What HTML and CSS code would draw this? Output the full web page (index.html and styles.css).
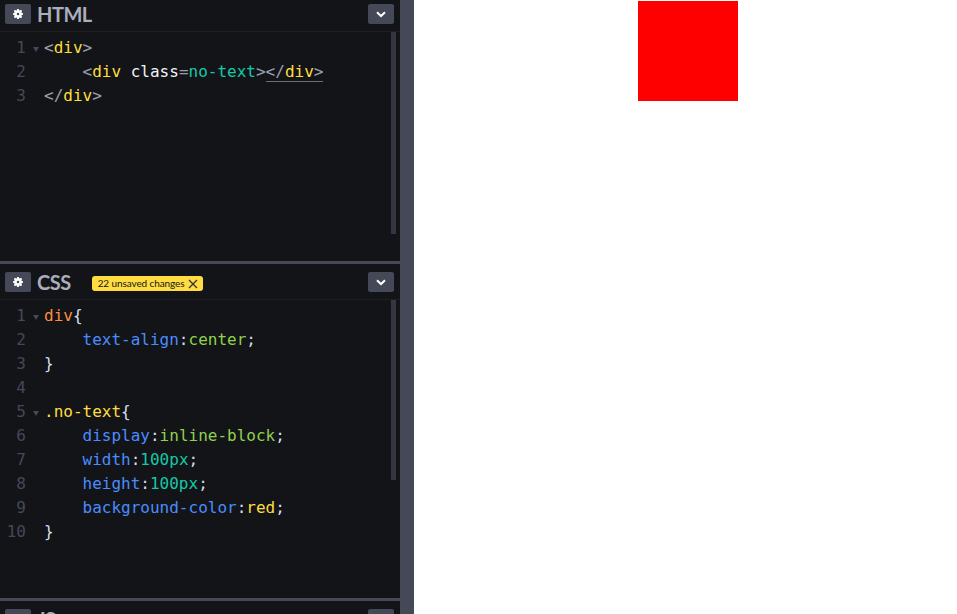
FILE: index.html
```html
<!DOCTYPE html>
<html lang="en">
<head>
<meta charset="utf-8">
<title>CodePen editor</title>
<link rel="stylesheet" href="styles.css">
</head>
<body>
<div class="app">
  <div class="editors">
    <section class="panel panel-html">
      <header class="bar">
        <button class="btn"><svg class="gear" viewBox="0 0 12 12"><path fill-rule="evenodd" d="M5 0h2l.3 1.5 1 .4L9.6 1 11 2.4l-.9 1.3.4 1 1.5.3v2l-1.5.3-.4 1 .9 1.3L9.6 11l-1.3-.9-1 .4L7 12H5l-.3-1.5-1-.4-1.3.9L1 9.6l.9-1.3-.4-1L0 7V5l1.5-.3.4-1L1 2.4 2.4 1l1.3.9 1-.4zM6 4.500a1.500 1.500 0 1 0 0 3 1.500 1.500 0 0 0 0-3z"/></svg></button>
        <h2 class="title">HTML</h2>
        <button class="btn btn-end"><svg class="chev" viewBox="0 0 10 7"><path d="M1 1.200 5 5l4-3.800"/></svg></button>
      </header>
      <div class="code">
        <div class="gutter"><span>1</span><span>2</span><span>3</span></div>
        <div class="folds"><span class="fold"></span></div>
<pre class="lines"><span class="p">&lt;</span><span class="y">div</span><span class="p">&gt;</span>
    <span class="p">&lt;</span><span class="y">div</span> <span class="w">class</span><span class="p">=</span><span class="t">no-text</span><span class="p">&gt;</span><span class="match"><span class="p">&lt;/</span><span class="y">div</span><span class="p">&gt;</span></span>
<span class="p">&lt;/</span><span class="y">div</span><span class="p">&gt;</span></pre>
        <div class="scroll scroll-html"></div>
      </div>
    </section>
    <section class="panel panel-css">
      <header class="bar">
        <button class="btn"><svg class="gear" viewBox="0 0 12 12"><path fill-rule="evenodd" d="M5 0h2l.3 1.5 1 .4L9.6 1 11 2.4l-.9 1.3.4 1 1.5.3v2l-1.5.3-.4 1 .9 1.3L9.6 11l-1.3-.9-1 .4L7 12H5l-.3-1.5-1-.4-1.3.9L1 9.6l.9-1.3-.4-1L0 7V5l1.5-.3.4-1L1 2.4 2.4 1l1.3.9 1-.4zM6 4.500a1.500 1.500 0 1 0 0 3 1.500 1.500 0 0 0 0-3z"/></svg></button>
        <h2 class="title">CSS</h2>
        <span class="badge">22 unsaved changes<svg class="x" viewBox="0 0 10 10"><path d="M1 1l8 8M9 1l-8 8"/></svg></span>
        <button class="btn btn-end"><svg class="chev" viewBox="0 0 10 7"><path d="M1 1.200 5 5l4-3.800"/></svg></button>
      </header>
      <div class="code">
        <div class="gutter"><span>1</span><span>2</span><span>3</span><span>4</span><span>5</span><span>6</span><span>7</span><span>8</span><span>9</span><span>10</span></div>
        <div class="folds"><span class="fold"></span><span></span><span></span><span></span><span class="fold"></span></div>
<pre class="lines"><span class="o">div</span><span class="l">{</span>
    <span class="b">text-align</span><span class="l">:</span><span class="g">center</span><span class="l">;</span>
<span class="l">}</span>

<span class="c">.no-text</span><span class="l">{</span>
    <span class="b">display</span><span class="l">:</span><span class="g">inline-block</span><span class="l">;</span>
    <span class="b">width</span><span class="l">:</span><span class="t">100px</span><span class="l">;</span>
    <span class="b">height</span><span class="l">:</span><span class="t">100px</span><span class="l">;</span>
    <span class="b">background-color</span><span class="l">:</span><span class="c">red</span><span class="l">;</span>
<span class="l">}</span></pre>
        <div class="scroll scroll-css"></div>
      </div>
    </section>
    <section class="panel panel-js">
      <header class="bar">
        <button class="btn"></button>
        <h2 class="title">JS</h2>
        <button class="btn btn-end"></button>
      </header>
    </section>
  </div>
  <div class="resizer"></div>
  <main class="preview"><div class="no-text"></div></main>
</div>
</body>
</html>
```

FILE: styles.css
```css
* { box-sizing: border-box; }
html, body { margin: 0; height: 100%; overflow: hidden; background: #fff; }
.app { display: flex; height: 614px; overflow: hidden; }
.editors { width: 400px; flex: none; display: flex; flex-direction: column; background: #131417; overflow: hidden; }
.panel { flex: none; display: flex; flex-direction: column; overflow: hidden; }
.panel-html { height: 261px; }
.panel-css { height: 337px; border-top: 3px solid #444857; }
.panel-js { flex: 1 1 auto; min-height: 0; border-top: 3px solid #444857; }
.bar { flex: none; height: 32px; display: flex; align-items: flex-start; padding: 4px 6px 0 5px; background: #131417; border-bottom: 1px solid #1e1f26; }
.panel-css .bar { height: 36px; padding-top: 8px; }
.panel-js .bar { padding-top: 8px; }
.btn { width: 26px; height: 20px; padding: 0; border: 0; border-radius: 2px; background: #444857; display: flex; align-items: center; justify-content: center; }
.btn-end { margin-left: auto; }
.gear { width: 10px; height: 10px; fill: #fff; }
.chev { width: 10px; height: 7px; fill: none; stroke: #fff; stroke-width: 2; }
.title { margin: -2px 0 0 6px; font: 700 20px/24px Lato, sans-serif; color: #aaaebc; letter-spacing: -0.5px; }
.badge { margin: 4px 0 0 21px; height: 15px; width: 111px; padding-left: 6px; display: flex; align-items: center; gap: 4px; background: #ffdd40; border-radius: 3px; font: 400 10px/15px Lato, sans-serif; letter-spacing: -0.1px; color: #131417; white-space: nowrap; }
.x { width: 10px; height: 10px; fill: none; stroke: #333; stroke-width: 1.300; }
.code { flex: 1; position: relative; display: flex; padding-top: 4px; min-height: 0; }
.gutter { width: 26px; flex: none; display: flex; flex-direction: column; align-items: flex-end; font: 16px/24px "DejaVu Sans Mono", monospace; color: #444857; }
.folds { width: 18px; flex: none; display: flex; flex-direction: column; padding-left: 1px; }
.folds span { height: 24px; display: flex; align-items: center; justify-content: center; }
.fold::before { content: ""; width: 0; height: 0; border-left: 3px solid transparent; border-right: 3px solid transparent; border-top: 5px solid #444857; margin-top: 2px; }
.lines { margin: 0; font: 16px/24px "DejaVu Sans Mono", monospace; color: #fff; }
.p { color: #9a9fb0; }
.y { color: #ffdd40; }
.w { color: #f0f2f8; }
.t { color: #14c9a8; }
.o { color: #ff8d41; }
.l { color: #d5deef; }
.b { color: #4a8cff; }
.g { color: #8fd14f; }
.c { color: #ffdd40; }
.match { border-bottom: 1px solid #6a6e7c; }
.scroll { position: absolute; right: 4px; top: 0; width: 5px; background: #343741; }
.scroll-html { height: 202px; }
.scroll-css { height: 180px; }
.resizer { width: 14px; flex: none; background: #444857; }
.preview { flex: 1; background: #fff; padding: 1px 0 0 224px; }
.no-text { width: 100px; height: 100px; background: red; }
```
